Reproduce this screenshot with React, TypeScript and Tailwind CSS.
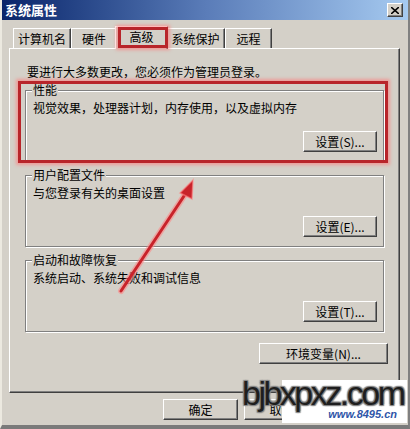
import React from "react";

const raised =
  "border border-t-white border-l-white border-r-[#404040] border-b-[#404040] shadow-[inset_-1px_-1px_0_#808080] bg-[#d4d0c8]";

function Btn({ label, className = "" }: { label: string; className?: string }) {
  return (
    <div className={`${raised} flex items-center justify-center h-[21px] leading-[14px] ${className}`}>
      {label}
    </div>
  );
}

function Group({
  title,
  text,
  btn,
  className = "",
}: {
  title: string;
  text: string;
  btn: string;
  className?: string;
}) {
  return (
    <div
      className={`relative ml-[15px] w-[359px] h-[72px] border border-[#808080] shadow-[inset_1px_1px_0_#fff,1px_1px_0_#fff] flex flex-col ${className}`}
    >
      <div className="absolute -top-[8px] left-[6px] px-[1px] bg-[#d4d0c8] leading-[14px]">{title}</div>
      <div className="mt-[10px] ml-[7px] leading-[14px]">{text}</div>
      <div className="flex justify-end mt-[16px] mr-[6px]">
        <Btn label={btn} className="w-[74px]" />
      </div>
    </div>
  );
}

function Tab({ label, w, selected = false }: { label: string; w: number; selected?: boolean }) {
  return (
    <div
      style={{ width: w }}
      className={
        selected
          ? "relative z-10 -mx-[2px] -mb-[1px] h-[23px] bg-[#d4d0c8] border-t border-l border-t-white border-l-white border-r border-r-[#404040] shadow-[inset_-1px_0_0_#808080] flex items-start justify-center pt-[3px] leading-[14px]"
          : "h-[20px] bg-[#d4d0c8] border-t border-l border-t-white border-l-white border-r border-r-[#404040] shadow-[inset_-1px_0_0_#808080] flex items-start justify-center pt-[3px] leading-[14px]"
      }
    >
      {label}
    </div>
  );
}

export default function App() {
  return (
    <div className="relative w-[410px] h-[429px] bg-[#d4d0c8] overflow-hidden text-[12px] text-black font-['Noto_Sans_CJK_SC','Liberation_Sans',sans-serif] border-l-[2px] border-l-[#ece9e0] border-r-[2px] border-r-[#808080] border-b-[4px] border-b-[#7a7a7a]">
      {/* Title bar */}
      <div className="h-[20px] flex items-center justify-between pl-[3px] pr-[5px] bg-linear-to-r from-[#0a246a] via-[#5a7cb8] to-[#a6caf0]">
        <span className="text-white font-bold text-[13px] leading-[16px]">系统属性</span>
        <div className={`${raised} w-[16px] h-[14px] flex items-center justify-center`}>
          <svg width="8" height="7" viewBox="0 0 8 7">
            <path d="M0 0 L8 7 M8 0 L0 7" stroke="#000" strokeWidth="1.6" />
          </svg>
        </div>
      </div>

      {/* Tabs */}
      <div className="flex items-end h-[28px] pl-[11px]">
        <Tab label="计算机名" w={58} />
        <Tab label="硬件" w={46} />
        <Tab label="高级" w={53} selected />
        <Tab label="系统保护" w={59} />
        <Tab label="远程" w={47} />
      </div>

      {/* Panel */}
      <div className="ml-[7px] w-[391px] h-[345px] border border-t-white border-l-white border-r-[#404040] border-b-[#404040] shadow-[inset_-1px_-1px_0_#808080] flex flex-col">
        <div className="mt-[16px] ml-[17px] leading-[14px]">要进行大多数更改，您必须作为管理员登录。</div>
        <Group className="mt-[11px]" title="性能" text="视觉效果，处理器计划，内存使用，以及虚拟内存" btn="设置(S)..." />
        <Group className="mt-[13px]" title="用户配置文件" text="与您登录有关的桌面设置" btn="设置(E)..." />
        <Group className="mt-[13px]" title="启动和故障恢复" text="系统启动、系统失败和调试信息" btn="设置(T)..." />
        <div className="flex justify-end mt-[11px] mr-[11px]">
          <Btn label="环境变量(N)..." className="w-[129px]" />
        </div>
      </div>

      {/* Bottom buttons */}
      <div className="flex gap-[6px] pl-[161px] mt-[6px]">
        <Btn label="确定" className="w-[75px]" />
        <Btn label="取消" className="w-[75px]" />
        <Btn label="应用(A)" className="w-[75px]" />
      </div>

      {/* Red annotations */}
      <div className="absolute left-[116px] top-[27px] w-[50px] h-[21px] border-[3px] border-[#b8252a] shadow-[0_0_3px_2px_rgba(255,120,120,0.6)] z-20" />
      <div className="absolute left-[16px] top-[81px] w-[370px] h-[82px] border-[3px] border-[#b8252a] shadow-[0_0_3px_2px_rgba(255,120,120,0.6)] z-20" />
      <svg className="absolute left-0 top-0 z-20" width="410" height="429">
        <line x1="119" y1="291" x2="186" y2="190" stroke="rgba(255,130,130,0.55)" strokeWidth="6" strokeLinecap="round" />
        <line x1="119" y1="291" x2="186" y2="190" stroke="#c8232a" strokeWidth="3" strokeLinecap="round" />
        <polygon points="191,180 178,193 190,199" fill="#c8232a" stroke="rgba(255,130,130,0.6)" strokeWidth="1.5" />
      </svg>

      {/* Watermark */}
      <div className="absolute left-[280px] top-[380px] w-[125px] h-[43px] bg-white z-30 flex flex-col items-end justify-end pr-[10px] pb-[3px]">
        <span className="italic font-bold text-[11px] leading-[12px] text-[#2f55a8] font-['Liberation_Sans',sans-serif]">www.8495.cn</span>
      </div>
      <div className="absolute left-[240px] top-[373px] z-40 text-[34px] leading-[40px] tracking-[-2.5px] text-[#1e1e1e] font-['Liberation_Sans',sans-serif] [text-shadow:0_0_2px_#777,1px_1px_1px_#888,-1px_-1px_1px_#888,1px_-1px_1px_#888,-1px_1px_1px_#888]">
        bjbxpxz.com
      </div>
    </div>
  );
}
